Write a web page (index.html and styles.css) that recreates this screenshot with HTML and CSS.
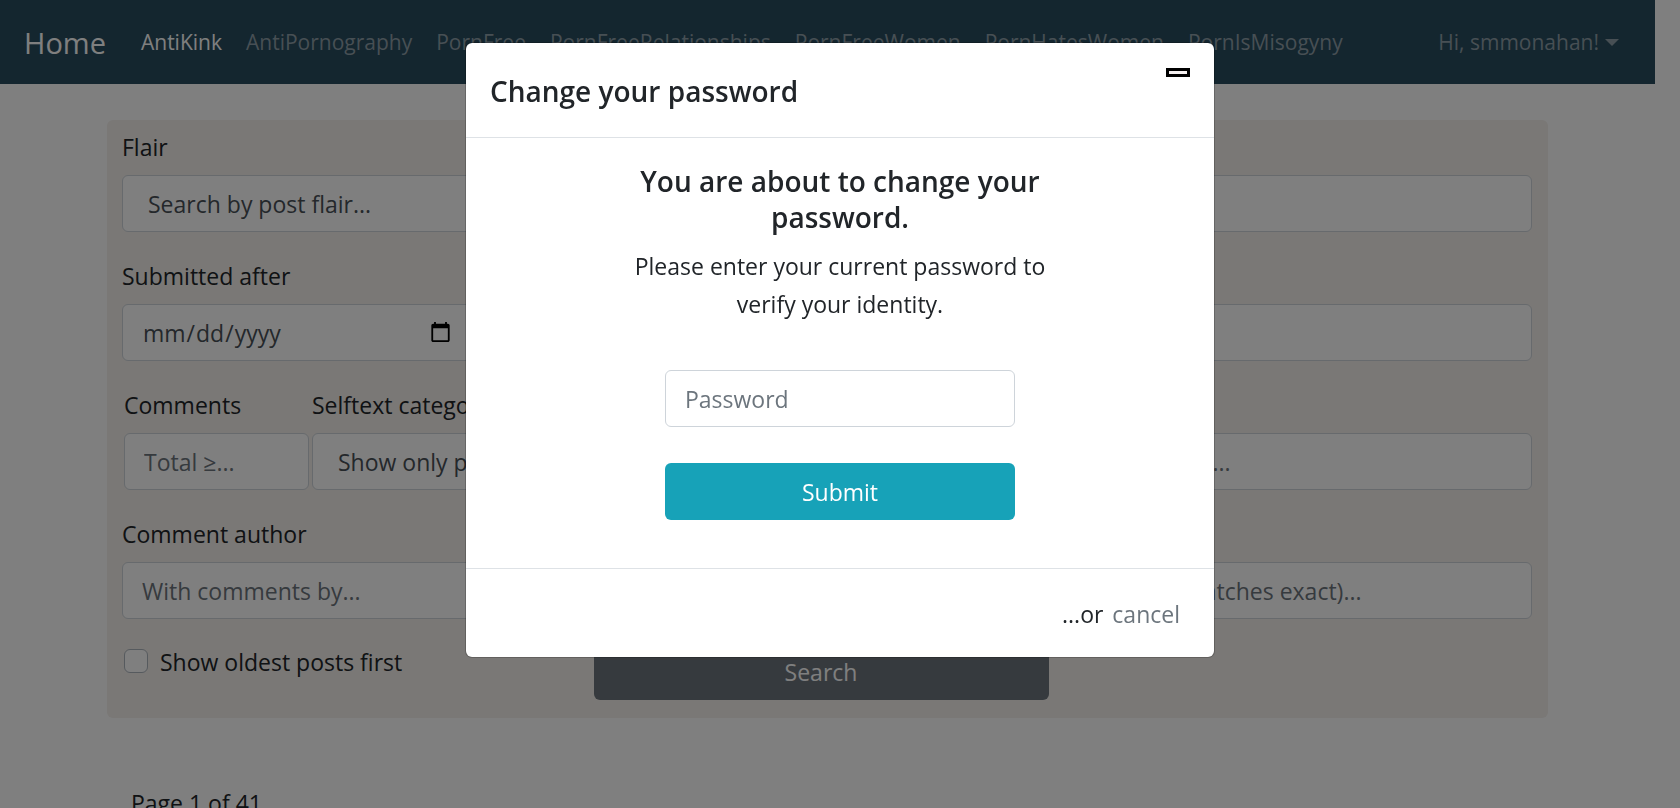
FILE: index.html
```html
<!DOCTYPE html>
<html lang="en">
<head>
<meta charset="utf-8">
<title>AntiKink</title>
<link rel="stylesheet" href="styles.css">
</head>
<body class="modal-open">
<header class="navbar">
  <a class="brand" href="#">Home</a>
  <nav class="nav-links">
    <a class="nav-link active" href="#">AntiKink</a>
    <a class="nav-link" href="#">AntiPornography</a>
    <a class="nav-link" href="#">PornFree</a>
    <a class="nav-link" href="#">PornFreeRelationships</a>
    <a class="nav-link" href="#">PornFreeWomen</a>
    <a class="nav-link" href="#">PornHatesWomen</a>
    <a class="nav-link" href="#">PornIsMisogyny</a>
  </nav>
  <button class="user-menu" type="button">Hi, smmonahan!<span class="caret"></span></button>
</header>

<main class="container">
  <form class="filters">
    <div class="row halves">
      <div class="field">
        <label for="flair">Flair</label>
        <select id="flair" class="control"><option>Search by post flair...</option></select>
      </div>
      <div class="field">
        <input class="control" type="text" aria-label="Author">
      </div>
    </div>
    <div class="row quarter">
      <div class="field">
        <label for="after">Submitted after</label>
        <input id="after" class="control" type="date">
      </div>
      <div class="field">
        <input class="control" type="text" aria-label="Title">
      </div>
    </div>
    <div class="row halves">
      <div class="split">
        <div class="field">
          <label for="comments">Comments</label>
          <input id="comments" class="control" type="text" placeholder="Total ≥...">
        </div>
        <div class="field">
          <label for="category">Selftext category</label>
          <select id="category" class="control"><option>Show only posts</option></select>
        </div>
      </div>
      <div class="field">
        <input class="control" type="text" aria-label="Selftext" placeholder="Selftext contents (matches exact)...">
      </div>
    </div>
    <div class="row halves">
      <div class="field">
        <label for="comment-author">Comment author</label>
        <input id="comment-author" class="control" type="text" placeholder="With comments by...">
      </div>
      <div class="field">
        <input class="control" type="text" aria-label="Comment text" placeholder="Search comments containing (matches exact)...">
      </div>
    </div>
    <div class="actions">
      <label class="check"><input type="checkbox">Show oldest posts first</label>
      <button class="btn btn-dark" type="submit">Search</button>
    </div>
  </form>
  <p class="page-count">Page 1 of 41</p>
</main>

<div class="backdrop">
  <section class="modal" role="dialog" aria-modal="true" aria-labelledby="dialog-title">
    <div class="modal-header">
      <h2 id="dialog-title">Change your password</h2>
      <button class="close" type="button" aria-label="Close"></button>
    </div>
    <div class="modal-body">
      <h3>You are about to change your password.</h3>
      <p>Please enter your current password to verify your identity.</p>
      <form class="password-form">
        <input class="control" type="password" placeholder="Password" aria-label="Password">
        <button class="btn btn-info" type="submit">Submit</button>
      </form>
    </div>
    <div class="modal-footer">...or <a href="#">cancel</a></div>
  </section>
</div>
</body>
</html>
```
FILE: styles.css
```css
* {
  box-sizing: border-box;
}

body {
  margin: 0;
  background: #fff;
  color: #212529;
  font: 400 23px/38px "Open Sans", "Noto Sans", sans-serif;
}

/* Keeps the space of the hidden scrollbar while a dialog is open */
.modal-open {
  height: 100vh;
  overflow: hidden;
  padding-right: 25px;
}

h2, h3, p {
  margin: 0;
}

h2, h3 {
  font-size: 28px;
  line-height: 36px;
  font-weight: 600;
}

a {
  color: inherit;
  text-decoration: none;
}

button, input, select {
  margin: 0;
  font: inherit;
}

.navbar {
  display: flex;
  align-items: center;
  height: 84px;
  padding: 0 36px 0 24px;
  background: #284c5e;
  color: #8f9fa8;
  font-size: 21px;
  white-space: nowrap;
}

.brand {
  margin-right: 35px;
  padding-top: 2px;
  color: #fff;
  font-size: 29px;
}

.nav-links {
  display: flex;
  flex: 1;
  gap: 24px;
}

.nav-link.active {
  color: #fff;
}

.user-menu {
  display: flex;
  align-items: center;
  gap: 6px;
  padding: 0;
  border: 0;
  background: none;
  color: inherit;
}

.caret {
  border: 7px solid transparent;
  border-top-color: currentColor;
  border-bottom: 0;
}

.container {
  max-width: 1441px;
  margin: 36px auto 0;
}

.filters {
  padding: 8px 16px 18px 15px;
  border-radius: 6px;
  background: #f4f0ec;
}

.row {
  display: grid;
  gap: 24px;
  margin-bottom: 25px;
}

.halves {
  grid-template-columns: 1fr 1fr;
}

.quarter {
  grid-template-columns: 1fr 3fr;
  gap: 4px;
}

.split {
  display: grid;
  grid-template-columns: 185px 1fr;
  gap: 3px;
  padding-left: 2px;
}

.actions {
  display: grid;
  grid-template-columns: 1fr 455px 1fr;
  gap: 16px;
  margin: -1px 12px 0 0;
}

.field {
  display: flex;
  flex-direction: column;
  justify-content: flex-end;
  gap: 9px;
  min-width: 0;
}

.control {
  width: 100%;
  height: 57px;
  padding: 9px 19px;
  border: 1px solid #ced4da;
  border-radius: 6px;
  background: #fff;
  color: #495057;
  appearance: none;
}

.control::placeholder {
  color: #6c757d;
  opacity: 1;
}

select.control {
  padding: 0 25px;
}

.check {
  display: flex;
  align-items: center;
  align-self: start;
  gap: 12px;
}

.check input {
  width: 24px;
  height: 24px;
  margin: 0 0 3px 2px;
  border: 1px solid #adb5bd;
  border-radius: 6px;
  background: #fff;
  appearance: none;
}

.btn {
  height: 57px;
  padding: 0 18px;
  border: 0;
  border-radius: 6px;
  color: #fff;
}

.btn-dark {
  background: #6c757d;
}

.btn-info {
  background: #17a2b8;
}

.page-count {
  margin: 66px 24px 0;
}

.backdrop {
  position: fixed;
  inset: 0;
  padding-top: 42px;
  background: rgba(0, 0, 0, .5);
}

.modal {
  max-width: 750px;
  margin: 0 auto;
  border: 1px solid rgba(0, 0, 0, .2);
  border-radius: 7px;
  background: #fff;
  background-clip: padding-box;
}

.modal-header {
  display: flex;
  justify-content: space-between;
  padding: 25px 24px 28px;
  border-bottom: 1px solid #dee2e6;
}

.modal-header h2 {
  padding-top: 5px;
}

.close {
  width: 24px;
  height: 9px;
  padding: 0;
  border: 3px solid #000;
  background: #f5f0f0;
}

.modal-body {
  display: flex;
  flex-direction: column;
  align-items: center;
  gap: 12px;
  padding: 25px 24px 48px;
  text-align: center;
}

.modal-body h3,
.modal-body p {
  max-width: 425px;
}

.password-form {
  display: grid;
  gap: 36px;
  width: 350px;
  margin-top: 35px;
}

.modal-footer {
  padding: 26px 34px 24px;
  border-top: 1px solid #dee2e6;
  text-align: right;
}

.modal-footer a {
  margin-left: 3px;
  color: #6c757d;
}
```
